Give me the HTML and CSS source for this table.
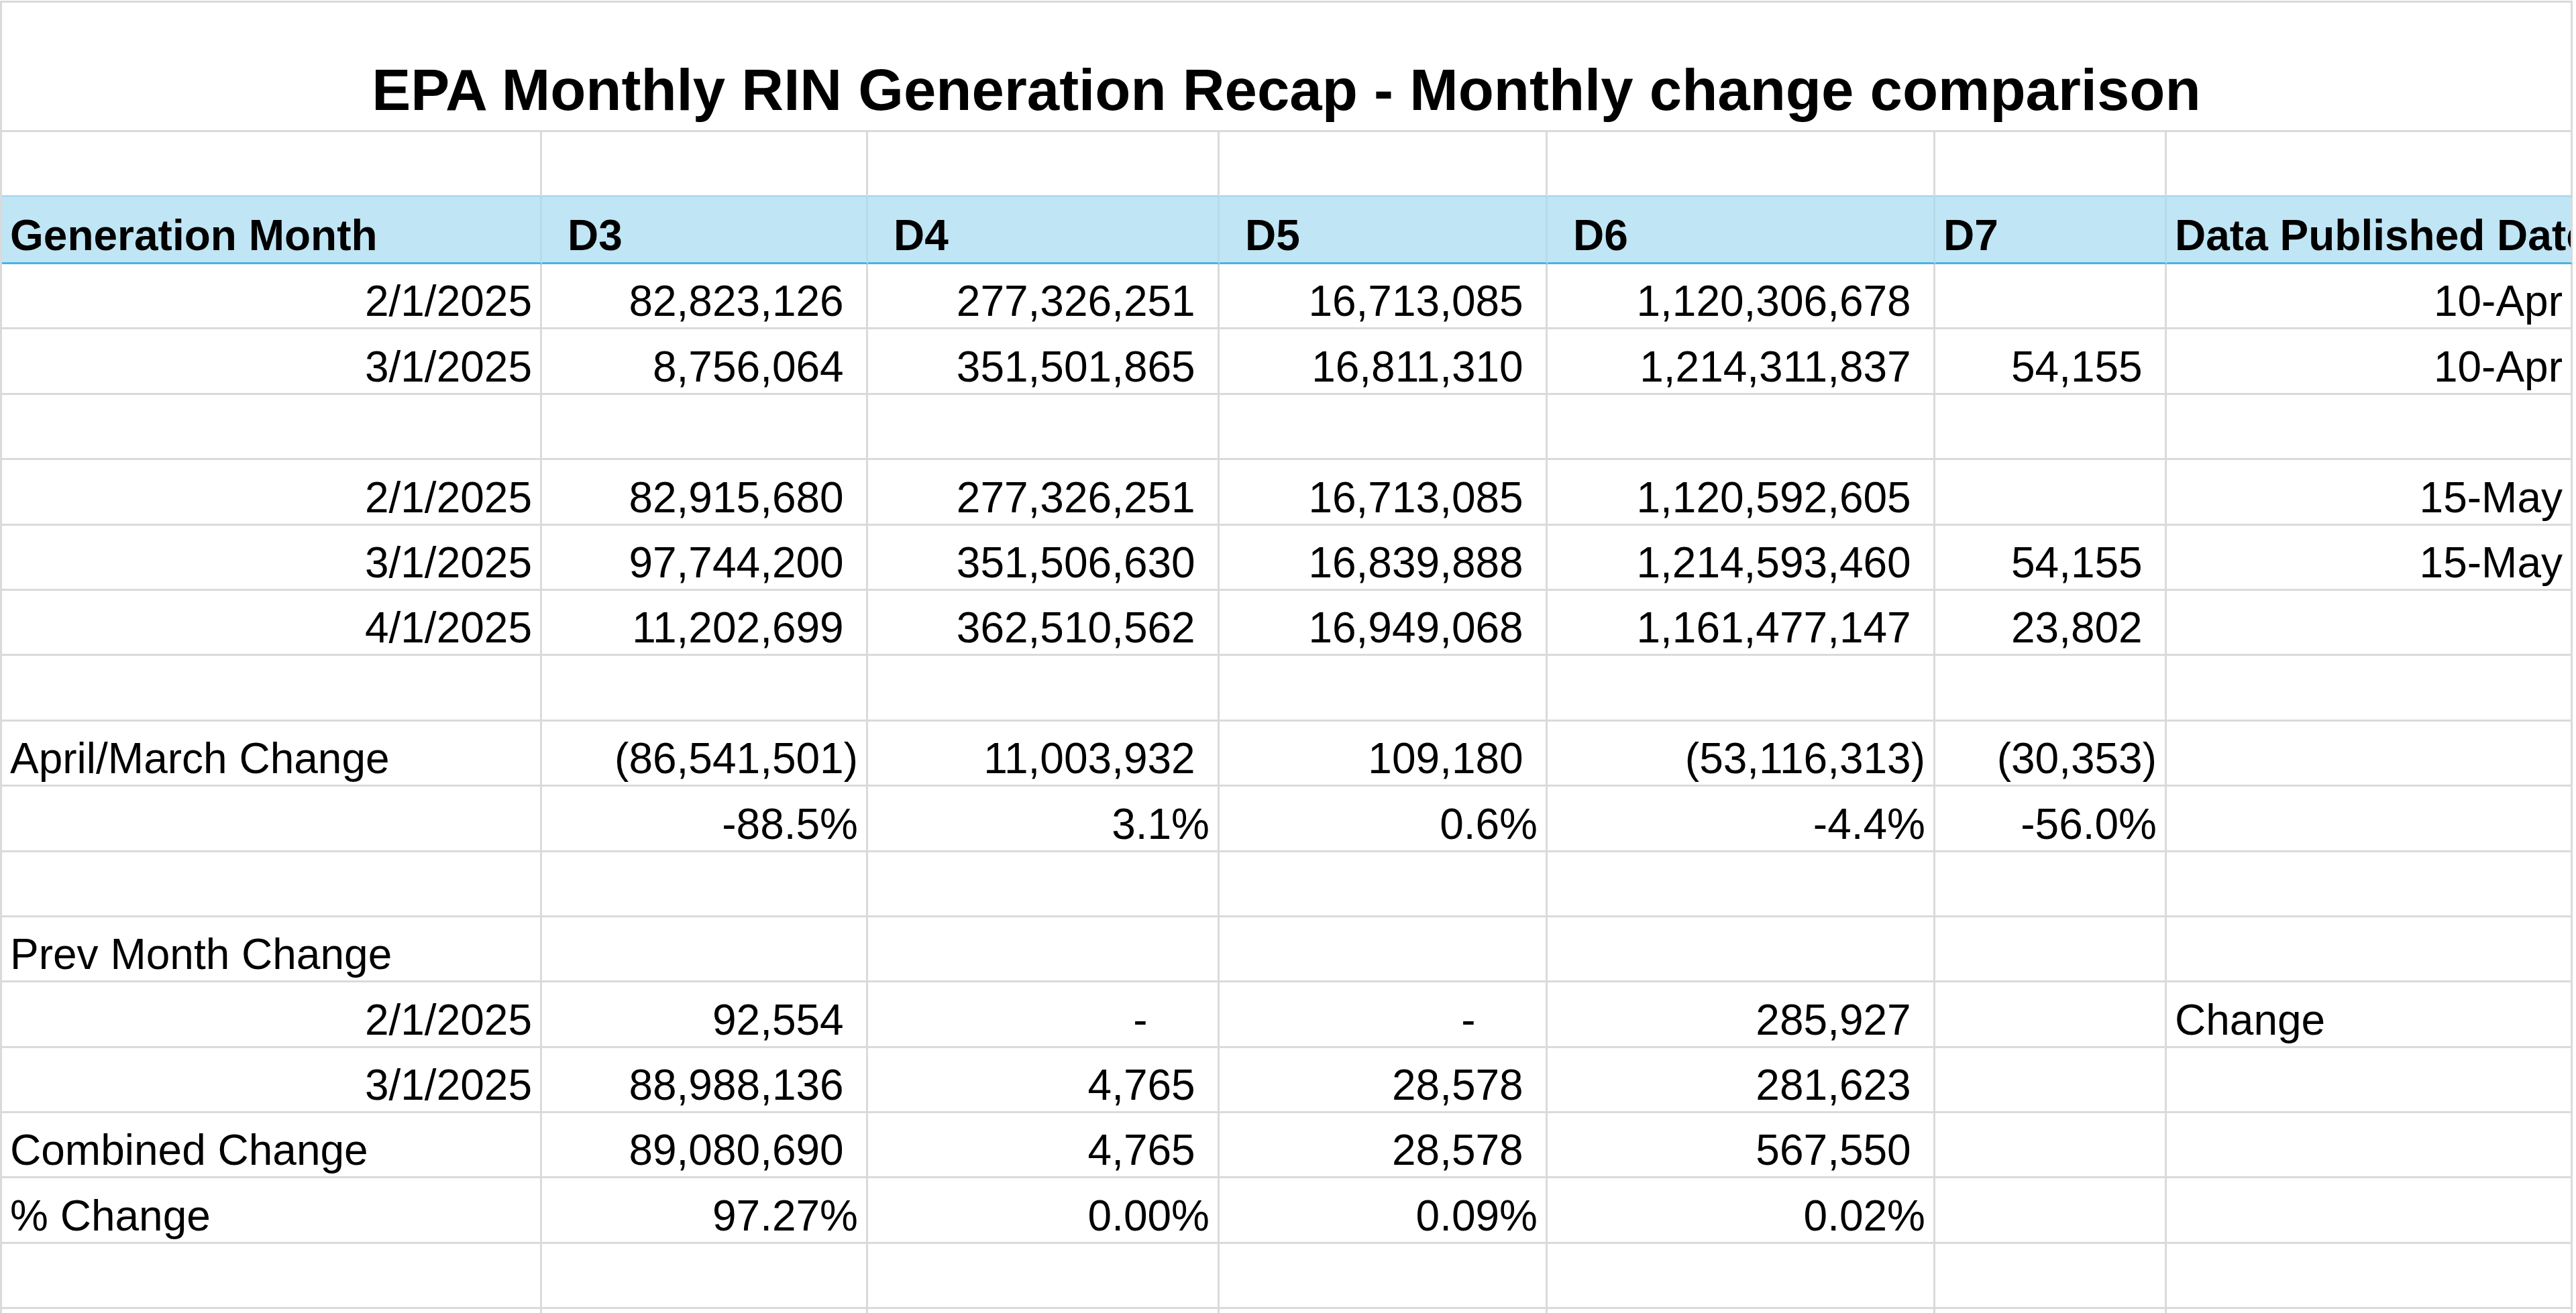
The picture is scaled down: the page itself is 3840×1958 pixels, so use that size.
FILE: index.html
```html
<!DOCTYPE html>
<html lang="en">
<head>
<meta charset="utf-8">
<title>EPA Monthly RIN Generation Recap</title>
<link rel="stylesheet" href="styles.css">
</head>
<body>
<div class="sheet">
  <div class="c title">EPA Monthly RIN Generation Recap - Monthly change comparison</div>

  <div class="c pre"></div><div class="c pre"></div><div class="c pre"></div><div class="c pre"></div><div class="c pre"></div><div class="c pre"></div><div class="c pre"></div>

  <div class="c h">Generation Month</div>
  <div class="c h ind">D3</div>
  <div class="c h ind">D4</div>
  <div class="c h ind">D5</div>
  <div class="c h ind">D6</div>
  <div class="c h">D7</div>
  <div class="c h clip">Data Published Date</div>

  <div class="c r">2/1/2025</div><div class="c r n">82,823,126</div><div class="c r n">277,326,251</div><div class="c r n">16,713,085</div><div class="c r n">1,120,306,678</div><div class="c"></div><div class="c r">10-Apr</div>
  <div class="c r">3/1/2025</div><div class="c r n">8,756,064</div><div class="c r n">351,501,865</div><div class="c r n">16,811,310</div><div class="c r n">1,214,311,837</div><div class="c r n">54,155</div><div class="c r">10-Apr</div>
  <div class="c"></div><div class="c"></div><div class="c"></div><div class="c"></div><div class="c"></div><div class="c"></div><div class="c"></div>
  <div class="c r">2/1/2025</div><div class="c r n">82,915,680</div><div class="c r n">277,326,251</div><div class="c r n">16,713,085</div><div class="c r n">1,120,592,605</div><div class="c"></div><div class="c r">15-May</div>
  <div class="c r">3/1/2025</div><div class="c r n">97,744,200</div><div class="c r n">351,506,630</div><div class="c r n">16,839,888</div><div class="c r n">1,214,593,460</div><div class="c r n">54,155</div><div class="c r">15-May</div>
  <div class="c r">4/1/2025</div><div class="c r n">11,202,699</div><div class="c r n">362,510,562</div><div class="c r n">16,949,068</div><div class="c r n">1,161,477,147</div><div class="c r n">23,802</div><div class="c"></div>
  <div class="c"></div><div class="c"></div><div class="c"></div><div class="c"></div><div class="c"></div><div class="c"></div><div class="c"></div>
  <div class="c">April/March Change</div><div class="c r">(86,541,501)</div><div class="c r n">11,003,932</div><div class="c r n">109,180</div><div class="c r">(53,116,313)</div><div class="c r">(30,353)</div><div class="c"></div>
  <div class="c"></div><div class="c r">-88.5%</div><div class="c r">3.1%</div><div class="c r">0.6%</div><div class="c r">-4.4%</div><div class="c r">-56.0%</div><div class="c"></div>
  <div class="c"></div><div class="c"></div><div class="c"></div><div class="c"></div><div class="c"></div><div class="c"></div><div class="c"></div>
  <div class="c">Prev Month Change</div><div class="c"></div><div class="c"></div><div class="c"></div><div class="c"></div><div class="c"></div><div class="c"></div>
  <div class="c r">2/1/2025</div><div class="c r n">92,554</div><div class="c r z">-</div><div class="c r z">-</div><div class="c r n">285,927</div><div class="c"></div><div class="c">Change</div>
  <div class="c r">3/1/2025</div><div class="c r n">88,988,136</div><div class="c r n">4,765</div><div class="c r n">28,578</div><div class="c r n">281,623</div><div class="c"></div><div class="c"></div>
  <div class="c">Combined Change</div><div class="c r n">89,080,690</div><div class="c r n">4,765</div><div class="c r n">28,578</div><div class="c r n">567,550</div><div class="c"></div><div class="c"></div>
  <div class="c">% Change</div><div class="c r">97.27%</div><div class="c r">0.00%</div><div class="c r">0.09%</div><div class="c r">0.02%</div><div class="c"></div><div class="c"></div>
  <div class="c"></div><div class="c"></div><div class="c"></div><div class="c"></div><div class="c"></div><div class="c"></div><div class="c"></div>
  <div class="c"></div><div class="c"></div><div class="c"></div><div class="c"></div><div class="c"></div><div class="c"></div><div class="c"></div>
</div>
</body>
</html>
```

FILE: styles.css
```css
html, body {
  margin: 0;
  padding: 0;
  background: #ffffff;
}

body {
  font-family: "Liberation Sans", Arial, sans-serif;
  color: #000000;
  overflow: hidden;
}

.sheet {
  width: 3835px;
  margin-top: 1px;
  display: grid;
  grid-template-columns: 805px 486px 524px 489px 578px 345px 605px;
  grid-template-rows: 193px 97px 100px repeat(16, 97.4px) 20px;
  border-top: 3px solid #dadada;
  border-left: 3px solid #dadada;
  box-sizing: border-box;
  height: 1960px;
}

.c {
  box-sizing: border-box;
  border-right: 3px solid #dadada;
  border-bottom: 3px solid #dadada;
  display: flex;
  align-items: flex-end;
  justify-content: flex-start;
  padding: 0 12px 7px 12px;
  font-size: 64px;
  line-height: 64px;
  white-space: nowrap;
  min-width: 0;
}

.title {
  grid-column: 1 / -1;
  justify-content: center;
  font-size: 87px;
  line-height: 87px;
  font-weight: 700;
  padding-bottom: 17px;
}

.pre {
  border-bottom-color: #aadbf1;
}

.h {
  background: #c0e5f5;
  font-weight: 700;
  border-right-color: #b4dcee;
  border-bottom-color: #4bb2e4;
  padding-bottom: 8px;
}

.h.clip {
  overflow: hidden;
  border-right-color: #dadada;
}

.ind {
  padding-left: 38px;
}

.r {
  justify-content: flex-end;
}

.n {
  padding-right: calc(12px + 0.333em);
}

.z {
  padding-right: calc(12px + 1.445em);
}
```
